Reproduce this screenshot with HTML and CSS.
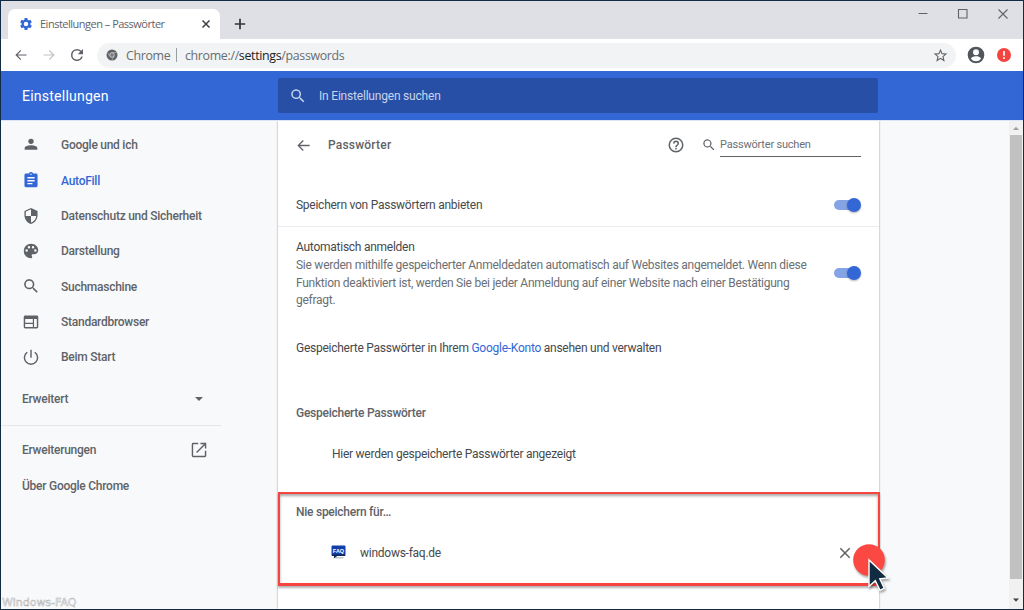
FILE: index.html
```html
<!DOCTYPE html>
<html lang="de">
<head>
<meta charset="utf-8">
<title>Einstellungen – Passwörter</title>
<link rel="stylesheet" href="styles.css">
</head>
<body>
<div class="window">
  <div class="tabstrip">
    <div class="tab">
      <svg class="gear" viewBox="0 0 24 24"><path fill="#3367d6" fill-rule="evenodd" d="M19.4 13a7.500 7.500 0 0 0 0-2l2.600-2-2.500-4.300-3 1.200a7.500 7.500 0 0 0-1.700-1L14.300 1.500H9.700L9.200 4.900a7.500 7.500 0 0 0-1.700 1l-3-1.200L2 9l2.600 2a7.500 7.500 0 0 0 0 2L2 15l2.500 4.300 3-1.200a7.500 7.500 0 0 0 1.700 1l.5 3.400h4.600l.5-3.400a7.500 7.500 0 0 0 1.700-1l3 1.200L22 15zM12 15.800a3.800 3.800 0 1 1 0-7.600 3.800 3.800 0 0 1 0 7.600z"/></svg>
      <span class="tab-title">Einstellungen – Passwörter</span>
      <svg class="tab-close" viewBox="0 0 10 10"><path d="M1.500 1.500l7 7M8.500 1.500l-7 7" stroke="#3c4043" stroke-width="1.500"/></svg>
    </div>
    <svg class="new-tab" viewBox="0 0 12 12"><path d="M6 .8v10.400M.8 6h10.400" stroke="#303438" stroke-width="1.700"/></svg>
    <div class="controls">
      <svg viewBox="0 0 12 12"><path d="M1.500 5.500h9" stroke="#5f6368"/></svg>
      <svg viewBox="0 0 12 12"><path d="M1.500 1.500h8.500v8.500h-8.500z" fill="none" stroke="#5f6368" stroke-width="1.100"/></svg>
      <svg viewBox="0 0 12 12"><path d="M1.500 1.500l9 9M10.500 1.500l-9 9" stroke="#5f6368" stroke-width="1.100"/></svg>
    </div>
  </div>
  <div class="toolbar">
    <svg class="nav" viewBox="0 0 24 24"><path fill="#5f6368" d="M21.500 11H6.100l6.300-6.300L11 3.300 2.300 12l8.700 8.700 1.400-1.400L6.100 13h15.400z"/></svg>
    <svg class="nav" viewBox="0 0 24 24"><path fill="#bdc1c6" d="M2.500 11h15.400l-6.300-6.300L13 3.300l8.700 8.700-8.700 8.700-1.400-1.400 6.300-6.300H2.500z"/></svg>
    <svg class="nav reload" viewBox="0 0 24 24"><path fill="#5f6368" d="M17.650 6.350A7.960 7.960 0 0 0 12 4a8 8 0 1 0 7.730 10h-2.080A6 6 0 1 1 12 6c1.660 0 3.140.69 4.220 1.780L13 11h7V4z"/></svg>
    <div class="omnibox">
      <svg class="chromium" viewBox="0 0 24 24"><circle cx="12" cy="12" r="11" fill="#5f6368"/><circle cx="12" cy="12" r="4.600" fill="#777b80" stroke="#dfe1e4" stroke-width="1.400"/><path d="M12 7.200h9.500M7.800 14.500 3.200 6.600M16.200 14.500l-4.700 8" stroke="#c4c7cb" stroke-width="1.200"/></svg>
      <span class="scheme">Chrome</span>
      <span class="bar"></span>
      <span class="url">chrome://<b>settings</b>/passwords</span>
      <svg class="star" viewBox="1 1 22 22"><path fill="#5f6368" d="M22 9.240l-7.190-.62L12 2 9.190 8.630 2 9.240l5.460 4.730L5.820 21 12 17.270 18.180 21l-1.630-7.030zM12 15.400l-3.760 2.270 1-4.280-3.320-2.880 4.380-.38L12 6.100l1.710 4.040 4.380.38-3.320 2.880 1 4.280z"/></svg>
    </div>
    <svg class="avatar" viewBox="0 0 24 24"><path fill="#51575d" d="M12 2a10 10 0 1 0 0 20 10 10 0 0 0 0-20zm0 3.200a3.600 3.600 0 1 1 0 7.200 3.600 3.600 0 0 1 0-7.200zm0 14.400a7.500 7.500 0 0 1-6-3.200c0-2 4-3 6-3s6 1 6 3a7.500 7.500 0 0 1-6 3.200z"/></svg>
    <svg class="alert" viewBox="0 0 14 14"><circle cx="7" cy="7" r="7" fill="#f44440"/><path d="M7 3v4.800M7 9.200v1.800" stroke="#fff" stroke-width="1.700"/></svg>
  </div>
  <header class="header">
    <h1>Einstellungen</h1>
    <div class="search">
      <svg viewBox="0 0 24 24"><path fill="#c5d2ee" d="M15.500 14h-.79l-.28-.27A6.500 6.500 0 1 0 13.730 14.430l.27.28v.79l5 4.990L20.490 19zM9.500 14a4.500 4.500 0 1 1 0-9 4.500 4.500 0 0 1 0 9z"/></svg>
      <span>In Einstellungen suchen</span>
    </div>
  </header>
  <div class="content">
    <nav class="sidebar">
      <ul class="menu">
        <li><svg viewBox="0 0 24 24"><circle cx="12" cy="6.500" r="4"/><path d="M2.500 19v-2.500c0-2.800 6-4 9.500-4s9.500 1.200 9.500 4V19z"/></svg><span>Google und ich</span></li>
        <li class="active"><svg viewBox="1 1 22 22"><path d="M19 3h-4.180a3 3 0 0 0-5.640 0H5a2 2 0 0 0-2 2v15a2 2 0 0 0 2 2h14a2 2 0 0 0 2-2V5a2 2 0 0 0-2-2zm-7 0a1 1 0 1 1 0 2 1 1 0 0 1 0-2zm2 15H7v-2h7zm3-4H7v-2h10zm0-4H7V8h10z"/></svg><span>AutoFill</span></li>
        <li><svg viewBox="1 1 22 22"><path fill-rule="evenodd" d="M12 1L3 5v6c0 5.550 3.840 10.740 9 12 5.160-1.260 9-6.450 9-12V5zm0 2.200v8.800h7c-.53 4.120-3.280 7.790-7 8.940V12H5V6.300z"/><path d="M12 2.500l7.500 3.600V12H12zM4.500 12H12v9.500C7 19.500 5 16 4.500 12z"/><path d="M5 6.300l7-3.100V12H5zM12 12h7c-.53 4.120-3.280 7.790-7 8.940z" fill="#f8f9fa"/></svg><span>Datenschutz und Sicherheit</span></li>
        <li><svg viewBox="1 1 22 22"><path d="M12 2a10 10 0 0 0 0 20c1 0 1.700-.8 1.700-1.700 0-.4-.2-.8-.4-1.100-.3-.3-.4-.7-.4-1.100 0-.9.700-1.600 1.600-1.600h2C19.500 16.500 22 14 22 11c0-5-4.500-9-10-9zM6 13a1.700 1.700 0 1 1 0-3.400A1.700 1.700 0 0 1 6 13zm3.200-4.500a1.700 1.700 0 1 1 0-3.400 1.700 1.700 0 0 1 0 3.400zm5.600 0a1.700 1.700 0 1 1 0-3.400 1.700 1.700 0 0 1 0 3.400zM18 13a1.700 1.700 0 1 1 0-3.400 1.700 1.700 0 0 1 0 3.400z"/></svg><span>Darstellung</span></li>
        <li><svg viewBox="1.500 1.500 20.500 20.500"><path d="M15.500 14h-.79l-.28-.27A6.500 6.500 0 1 0 13.730 14.430l.27.28v.79l5 4.990L20.490 19zM9.500 14a4.500 4.500 0 1 1 0-9 4.500 4.500 0 0 1 0 9z"/></svg><span>Suchmaschine</span></li>
        <li><svg viewBox="1 1 22 22"><path fill-rule="evenodd" d="M20 3H4a2 2 0 0 0-2 2v14a2 2 0 0 0 2 2h16a2 2 0 0 0 2-2V5a2 2 0 0 0-2-2zM14.500 19H4v-4.200h10.500zm0-6H4V8h10.500zM20 19h-3.800V8H20z"/></svg><span>Standardbrowser</span></li>
        <li><svg viewBox="1 1 22 22"><path d="M13 2h-2v11h2zm4.900 2.800-1.400 1.400A8 8 0 1 1 7.500 6.200L6.100 4.800a10 10 0 1 0 11.800 0z"/></svg><span>Beim Start</span></li>
      </ul>
      <div class="plain advanced"><span>Erweitert</span><svg viewBox="0 0 16 16"><path d="M4 6h8l-4 4z"/></svg></div>
      <div class="plain"><span>Erweiterungen</span><svg viewBox="1 1 22 22"><path d="M20 20H4V4h7V2H4a2 2 0 0 0-2 2v16a2 2 0 0 0 2 2h16a2 2 0 0 0 2-2v-7h-2zM14 2v2h4.600L8 14.600 9.400 16 20 5.400V10h2V2z"/></svg></div>
      <div class="plain"><span>Über Google Chrome</span></div>
      <div class="watermark">Windows-FAQ</div>
    </nav>
    <main class="card">
      <div class="page-head">
        <svg class="back" viewBox="1 1 22 22"><path d="M21 11H6.800l5.600-5.600L11 4l-8 8 8 8 1.400-1.400L6.800 13H21z"/></svg>
        <h2>Passwörter</h2>
        <svg class="help" viewBox="0 0 24 24"><path d="M11 18h2v-2h-2zm1-16a10 10 0 1 0 0 20 10 10 0 0 0 0-20zm0 18a8 8 0 1 1 0-16 8 8 0 0 1 0 16zm0-14a4 4 0 0 0-4 4h2a2 2 0 1 1 4 0c0 2-3 1.750-3 5h2c0-2.250 3-2.500 3-5a4 4 0 0 0-4-4z"/></svg>
        <svg class="find" viewBox="2.500 2.500 19 19"><path d="M15.500 14h-.79l-.28-.27A6.500 6.500 0 1 0 13.730 14.430l.27.28v.79l5 4.990L20.490 19zM9.500 14a4.500 4.500 0 1 1 0-9 4.500 4.500 0 0 1 0 9z"/></svg>
        <div class="find-field">Passwörter suchen</div>
      </div>
      <div class="row offer"><span>Speichern von Passwörtern anbieten</span><i class="toggle"></i></div>
      <div class="row auto">
        <div><div class="label">Automatisch anmelden</div><p>Sie werden mithilfe gespeicherter Anmeldedaten automatisch auf Websites angemeldet. Wenn diese<br>Funktion deaktiviert ist, werden Sie bei jeder Anmeldung auf einer Website nach einer Bestätigung<br>gefragt.</p></div>
        <i class="toggle"></i>
      </div>
      <div class="account">Gespeicherte Passwörter in Ihrem <a>Google-Konto</a> ansehen und verwalten</div>
      <h3 class="saved">Gespeicherte Passwörter</h3>
      <div class="empty">Hier werden gespeicherte Passwörter angezeigt</div>
      <section class="never">
        <h3>Nie speichern für…</h3>
        <div class="site">
          <svg class="favicon" viewBox="0 0 15 15"><path d="M2 13.500h10l1-1.500H3z" fill="#c4c8cf"/><path d="M1.500.500h12q1 0 1 1v8.500q0 1-1 1H6l-3 2v-2H1.500q-1 0-1-1V1.500q0-1 1-1z" fill="#123eac"/><path d="M1 9.500h13v1q0 .5-1 .5H6l-3 2v-2H1z" fill="#102653"/><text x="7.500" y="7.500" text-anchor="middle">FAQ</text></svg>
          <span>windows-faq.de</span>
          <svg class="remove" viewBox="0 0 12 12"><path d="M1.300 1.300l9.400 9.400M10.700 1.300l-9.400 9.400" stroke="#5f6368" stroke-width="1.500"/></svg>
        </div>
        <svg class="pointer" viewBox="0 0 40 52"><circle cx="18" cy="18" r="15.800" fill="#fb4842"/><path d="M18 18v26.500l6.300-5.800 4.700 9.600 4.300-2.200-4.500-9.300 8.200-.8z" fill="#102c40" stroke="#fff" stroke-width="1.400"/></svg>
      </section>
    </main>
    <div class="scrollbar"><svg viewBox="0 0 14 14"><path d="M4 9l3-3.300L10 9z" fill="#a0a0a0"/></svg><div class="thumb"></div><svg viewBox="0 0 14 14"><path d="M4 5.500l3 3.300 3-3.300z" fill="#404040"/></svg></div>
  </div>
</div>
</body>
</html>
```
FILE: styles.css
```css
* { box-sizing: border-box; }
body { margin: 0; overflow: hidden; font: 12px/17.65px Roboto, "Liberation Sans", sans-serif; letter-spacing: -.255px; color: #46494d; }
h1, h2, h3, p, ul { margin: 0; padding: 0; }
svg { display: block; flex: none; }
.window { width: 1024px; height: 610px; border: 1px solid #132c45; display: flex; flex-direction: column; background: #f8f9fa; }

.tabstrip { height: 38px; flex: none; display: flex; align-items: flex-start; background: #dfe0e5; padding: 8px 0 0 7px; }
.tab { width: 212px; height: 30px; display: flex; align-items: center; background: #fff; border-radius: 7px 7px 0 0; padding: 0 9px 1px 11px; }
.gear { width: 14px; height: 14px; }
.tab-title { flex: 1; margin-left: 7px; font: 11px "Open Sans", sans-serif; letter-spacing: -.5px; color: #5f6368; white-space: nowrap; }
.tab-close { width: 10px; height: 10px; }
.new-tab { width: 12px; height: 12px; margin: 9px 0 0 14px; }
.controls { display: flex; gap: 28px; margin: -1px 14px 0 auto; }
.controls svg { width: 12px; height: 12px; }

.toolbar { height: 32px; flex: none; display: flex; align-items: center; background: #fff; padding-left: 13px; }
.nav { width: 14px; height: 14px; margin-right: 14px; }
.reload { width: 18px; height: 18px; margin: 0 11px 0 -2px; }
.omnibox { width: 859px; height: 25px; display: flex; align-items: center; background: #f1f3f4; border-radius: 13px; padding: 0 8px 0 9px; font: 12.4px "Open Sans", sans-serif; letter-spacing: -.33px; color: #686c71; }
.chromium { width: 12px; height: 12px; }
.scheme { width: 43px; margin-left: 8px; }
.bar { width: 1px; height: 14px; margin: 0 8px 0 7px; background: #9a9da2; }
.url b { font-weight: 400; color: #202124; }
.star { width: 15px; height: 15px; margin-left: auto; }
.avatar { width: 20px; height: 20px; margin-left: 10px; }
.alert { width: 14px; height: 14px; margin-left: 11px; }

.header { height: 49px; flex: none; display: flex; align-items: center; background: #3367d6; color: #fff; }
.header h1 { width: 277px; padding: 2px 0 0 21px; font-size: 14.1px; font-weight: 400; letter-spacing: .2px; }
.search { width: 600px; height: 35px; display: flex; align-items: center; background: #274fa6; border-radius: 2px; padding-left: 11px; color: #c9d4ec; letter-spacing: -.2px; }
.search span { padding-top: 2px; }
.search svg { width: 18px; height: 18px; margin-right: 12px; }

.content { flex: 1; min-height: 0; display: flex; overflow: hidden; border-top: 1px solid #dce4f5; }
.sidebar { width: 277px; flex: none; position: relative; padding-top: 6.500px; font-weight: 500; color: #5f6368; fill: #5f6368; }
.menu { list-style: none; }
.menu li { height: 35.3px; display: flex; align-items: center; gap: 22px; padding-left: 22px; }
.menu span, .plain span { padding-top: 2px; }
.menu svg { width: 16px; height: 16px; }
.menu .active { color: #3367d6; fill: #3367d6; }
.plain { width: 220px; height: 35.3px; display: flex; align-items: center; justify-content: space-between; padding: 0 14px 0 21px; }
.plain svg { width: 16px; height: 16px; }
.advanced { height: 51px; margin-bottom: 7px; border-bottom: 1px solid #e6e7e9; padding-bottom: 1px; }
.watermark { position: absolute; left: 1px; bottom: 0; font: 11px/13px "DejaVu Sans", sans-serif; letter-spacing: 0; color: #fff; -webkit-text-stroke: .5px #b0b0b0; }

.card { width: 601px; flex: none; background: #fff; box-shadow: 0 0 2px rgba(0,0,0,.4); }
.page-head { height: 48px; display: flex; align-items: center; padding: 0 18px; fill: #5f6368; }
.back { width: 15px; height: 15px; }
.page-head h2 { flex: 1; margin-left: 17px; padding-top: 2px; font-size: 12px; font-weight: 500; letter-spacing: .2px; color: #5f6368; }
.help { width: 18px; height: 18px; }
.find { width: 12px; height: 12px; margin: 0 5px 0 18px; }
.find-field { width: 141px; height: 23px; border-bottom: 1px solid #5f6368; color: #6c7075; font-size: 11px; line-height: 22px; letter-spacing: -.2px; }
.row { display: flex; align-items: center; justify-content: space-between; padding: 0 18px; }
.offer { height: 58px; padding-top: 15px; border-bottom: 1px solid #ececee; }
.offer span { padding-top: 2px; }
.auto { height: 92px; }
.auto > div { padding-top: 3px; }
.row p, .find-field { white-space: nowrap; }
.row p { color: #6b6f74; }
.toggle { width: 26px; height: 10px; border-radius: 5px; background: #85a4e6; position: relative; flex: none; margin-right: 1px; }
.toggle::after { content: ""; position: absolute; right: -1px; top: -2px; width: 14px; height: 14px; border-radius: 50%; background: #3367d6; box-shadow: 0 1px 2px rgba(0,0,0,.3); }
.account { padding: 21px 18px 0; }
.account a { color: #3367d6; }
.card h3 { padding-left: 18px; font-size: 12px; font-weight: 500; color: #5f6368; }
.card .saved { margin-top: 47px; }
.empty { padding: 24px 0 0 54px; }
.never { position: relative; width: 602px; height: 94px; margin-top: 28px; padding-top: 10px; border: 3px solid #f6443f; border-width: 2px 2px 3px 2px; box-shadow: 0 2px 2px rgba(0,0,0,.3), inset 0 2px 3px rgba(0,0,0,.35); }
.card .never h3 { padding-left: 16px; }
.site { display: flex; align-items: center; margin-top: 22px; padding: 0 27px 0 51px; }
.site span { padding-top: 1px; }
.favicon { width: 15px; height: 15px; margin-right: 14px; font: 700 5.5px "Liberation Sans", sans-serif; letter-spacing: 0; }
.favicon text { fill: #fff; }
.remove { width: 12px; height: 12px; margin-left: auto; }
.pointer { position: absolute; left: 571px; top: 48px; width: 40px; height: 52px; filter: drop-shadow(1px 2px 1px rgba(0,0,0,.35)); }

.scrollbar { width: 14px; flex: none; margin-left: auto; display: flex; flex-direction: column; background: #f1f1f2; }
.scrollbar svg { width: 14px; height: 14px; }
.scrollbar .thumb { height: 444px; margin: 0 1px; background: #c1c1c1; }
.scrollbar svg:last-child { margin-top: auto; margin-bottom: 2px; }
```
